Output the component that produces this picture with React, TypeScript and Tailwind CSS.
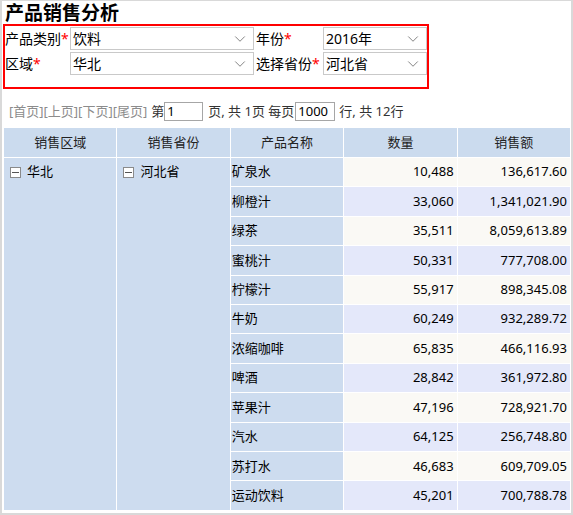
import React from 'react';
import { ChevronDown } from 'lucide-react';

const rows = [
    { name: '矿泉水', qty: '10,488', amount: '136,617.60' },
    { name: '柳橙汁', qty: '33,060', amount: '1,341,021.90' },
    { name: '绿茶', qty: '35,511', amount: '8,059,613.89' },
    { name: '蜜桃汁', qty: '50,331', amount: '777,708.00' },
    { name: '柠檬汁', qty: '55,917', amount: '898,345.08' },
    { name: '牛奶', qty: '60,249', amount: '932,289.72' },
    { name: '浓缩咖啡', qty: '65,835', amount: '466,116.93' },
    { name: '啤酒', qty: '28,842', amount: '361,972.80' },
    { name: '苹果汁', qty: '47,196', amount: '728,921.70' },
    { name: '汽水', qty: '64,125', amount: '256,748.80' },
    { name: '苏打水', qty: '46,683', amount: '609,709.05' },
    { name: '运动饮料', qty: '45,201', amount: '700,788.78' },
];

function Select({ value, width }: { value: string; width: string }) {
    return (
        <div className={`${width} h-[23px] border border-[#c9c9c9] bg-white flex items-center justify-between pl-[2px] pr-[4px]`}>
            <span className="text-[14px] text-black">{value}</span>
            <ChevronDown size={18} strokeWidth={1.2} className="text-[#777]" />
        </div>
    );
}

function Label({ text, width }: { text: string; width: string }) {
    return (
        <div className={`${width} text-[14px] text-black whitespace-nowrap`}>
            {text}<span className="text-[#ff0000]">*</span>
        </div>
    );
}

function MinusBox() {
    return (
        <span className="inline-flex w-[11px] h-[11px] border border-[#8a8a8a] bg-white items-center justify-center mr-[6px]">
            <span className="w-[7px] h-px bg-[#555]" />
        </span>
    );
}

export default function App() {
    return (
        <div className="w-[573px] h-[515px] border-2 border-t border-[#d9d9d9] bg-white font-['Noto_Sans','Noto_Sans_CJK_SC',sans-serif] text-black overflow-hidden">
            <div className="h-[23px] pl-[3px] pt-[1px] text-[19px] font-bold leading-[23px]">产品销售分析</div>

            <div className="ml-px w-[426px] h-[65px] border-2 border-[#ff0000] pt-px">
                <div className="flex items-center">
                    <Label text="产品类别" width="w-[65px]" />
                    <Select value="饮料" width="w-[184px]" />
                    <div className="pl-[2px]"><Label text="年份" width="w-[67px]" /></div>
                    <Select value="2016年" width="w-[104px]" />
                </div>
                <div className="flex items-center mt-[2px]">
                    <Label text="区域" width="w-[65px]" />
                    <Select value="华北" width="w-[184px]" />
                    <div className="pl-[2px]"><Label text="选择省份" width="w-[67px]" /></div>
                    <Select value="河北省" width="w-[104px]" />
                </div>
            </div>

            <div className="mt-[13px] h-[19px] flex items-center pl-[7px] text-[13px] text-[#333] whitespace-nowrap">
                <span className="text-[#8c8c8c]">[首页][上页][下页][尾页]</span>
                <span className="ml-[4px]">第</span>
                <div className="w-[39px] h-[19px] border border-[#a6a6a6] pl-[2px] leading-[17px] text-black">1</div>
                <span className="ml-[5px]">页, 共 1页 每页</span>
                <div className="ml-px w-[40px] h-[19px] border border-[#a6a6a6] pl-[2px] leading-[17px] text-black">1000</div>
                <span className="ml-[4px]">行, 共 12行</span>
            </div>

            <div className="mt-[7px] ml-[2px] w-[566px] grid grid-cols-5 grid-rows-[29px_repeat(12,28.42px)] gap-px bg-white text-[13px]">
                {['销售区域', '销售省份', '产品名称', '数量', '销售额'].map((h) => (
                    <div key={h} className="bg-[#cbdbee] flex items-center justify-center text-[#222] pt-px">{h}</div>
                ))}
                <div className="row-span-12 col-start-1 row-start-2 bg-[#cddcef]">
                    <div className="h-[28px] flex items-center pl-[6px]"><MinusBox />华北</div>
                </div>
                <div className="row-span-12 col-start-2 row-start-2 bg-[#cddcef]">
                    <div className="h-[28px] flex items-center pl-[6px]"><MinusBox />河北省</div>
                </div>
                {rows.map((r, i) => (
                    <React.Fragment key={r.name}>
                        <div className="col-start-3 bg-[#cddcef] flex items-center pl-[1px]">{r.name}</div>
                        <div className={`${i % 2 === 0 ? 'bg-[#faf9f5]' : 'bg-[#e4e8fa]'} flex items-center justify-end pr-[3px]`}>{r.qty}</div>
                        <div className={`${i % 2 === 0 ? 'bg-[#faf9f5]' : 'bg-[#e4e8fa]'} flex items-center justify-end pr-[3px]`}>{r.amount}</div>
                    </React.Fragment>
                ))}
            </div>
        </div>
    );
}
